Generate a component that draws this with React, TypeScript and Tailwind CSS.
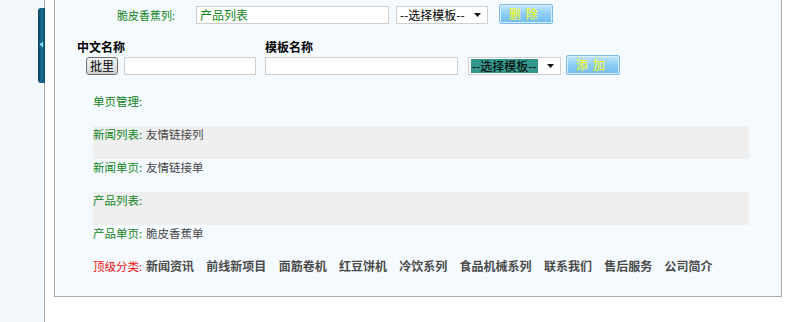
const font = { fontFamily: '"Noto Sans CJK SC", "Liberation Sans", sans-serif' };

function BlueButton({ label }: { label: string }) {
  return (
    <button className="flex h-[20px] w-[54px] items-center justify-center rounded-[2px] border border-[#7fb8e6] bg-gradient-to-b from-[#c4e6fb] via-[#8ccdf6] to-[#6fbbef] text-[12px] leading-none tracking-[5px] text-[#ffff00] shadow-[inset_0_0_0_1px_#d8eefc]">
      {label}
    </button>
  );
}

function FakeSelect({ width, highlight }: { width: string; highlight?: boolean }) {
  return (
    <div className={`flex h-[18px] ${width} items-center border border-[#cfcfcf] bg-white pl-[2px] pr-[6px] text-[12px] leading-none text-black`}>
      <span className={highlight ? 'bg-[#35978c] px-[1px] py-[1px]' : 'px-[1px]'}>--选择模板--</span>
      <span className="ml-auto">
        <svg width="7" height="4" viewBox="0 0 7 4">
          <path d="M0 0h7L3.5 4z" fill="#111" />
        </svg>
      </span>
    </div>
  );
}

function Row({ label, value, red, band }: { label: string; value?: string; red?: boolean; band?: boolean }) {
  return (
    <div className={`flex h-[33px] w-[656px] items-start leading-[16px] ${band ? 'bg-[#efefef]' : ''}`}>
      <span className={`w-[53px] shrink-0 text-[11.5px] ${red ? 'text-[#f01010]' : 'text-[#11851a]'}`}>{label}:</span>
      {value && <span className="text-[11.5px] text-[#474747]">{value}</span>}
    </div>
  );
}

const cats = ['新闻资讯', '前线新项目', '面筋卷机', '红豆饼机', '冷饮系列', '食品机械系列', '联系我们', '售后服务', '公司简介'];

export default function App() {
  return (
    <div className="flex h-[322px] w-[800px] bg-white" style={font}>
      {/* left strip with toggle tab */}
      <div className="flex h-full w-[45px] shrink-0 justify-end border-r border-[#a8a8a8] bg-[#f3f8fc] pt-[8px]">
        <div className="-mr-px h-[75px] w-[7px]">
          <svg width="7" height="75" viewBox="0 0 7 75">
            <defs>
              <linearGradient id="tab" x1="0" x2="1" y1="0" y2="0">
                <stop offset="0" stopColor="#0a3f5e" />
                <stop offset="0.5" stopColor="#1a6d8e" />
                <stop offset="1" stopColor="#0f5070" />
              </linearGradient>
            </defs>
            <path d="M3 0H7V75H3Q0 75 0 72V3Q0 0 3 0z" fill="url(#tab)" />
            <path d="M1.5 36.5L5 33.5V39.5z" fill="#8be6f5" />
          </svg>
        </div>
      </div>
      <div className="w-[9px] shrink-0" />
      {/* main panel */}
      <div className="h-[297px] w-[728px] shrink-0 border-x border-b border-[#ababab] bg-[#f5faff]">
        <div className="flex h-[30px] items-center pl-[62px]">
          <span className="w-[79px] text-[11px] text-[#11851a]">脆皮香蕉列:</span>
          <div className="flex h-[18px] w-[193px] items-center border border-[#cdcdcd] bg-white px-[3px] text-[12px] text-[#11851a]">产品列表</div>
          <div className="ml-[7px]"><FakeSelect width="w-[92px]" /></div>
          <div className="ml-[11px] -mt-[2px]"><BlueButton label="删除" /></div>
        </div>
        <div className="mt-[9px] flex h-[16px] items-center pl-[22px] text-[12px] font-bold text-black">
          <span className="w-[188px]">中文名称</span>
          <span>模板名称</span>
        </div>
        <div className="flex h-[21px] items-center pl-[31px]">
          <button className="flex h-[18px] w-[32px] items-center justify-center rounded-[3px] border border-[#707070] bg-gradient-to-b from-[#f6f6f6] to-[#d2d2d2] text-[12px] leading-none text-black">批里</button>
          <div className="ml-[6px] h-[18px] w-[132px] border border-[#cdcdcd] bg-white" />
          <div className="ml-[9px] h-[18px] w-[193px] border border-[#cdcdcd] bg-white" />
          <div className="ml-[10px]"><FakeSelect width="w-[93px]" highlight /></div>
          <div className="ml-[5px] -mt-[2px]"><BlueButton label="添加" /></div>
        </div>
        <div className="mt-[17px] pl-[38px]">
          <Row label="单页管理" />
          <Row label="新闻列表" value="友情链接列" band />
          <Row label="新闻单页" value="友情链接单" />
          <Row label="产品列表" band />
          <Row label="产品单页" value="脆皮香蕉单" />
          <div className="flex h-[33px] items-start leading-[16px]">
            <span className="w-[53px] shrink-0 text-[11.5px] text-[#f01010]">顶级分类:</span>
            <div className="flex gap-x-[12.3px] text-[12px] font-bold text-[#4a4a4a]">
              {cats.map((c) => (
                <span key={c}>{c}</span>
              ))}
            </div>
          </div>
        </div>
      </div>
    </div>
  );
}
